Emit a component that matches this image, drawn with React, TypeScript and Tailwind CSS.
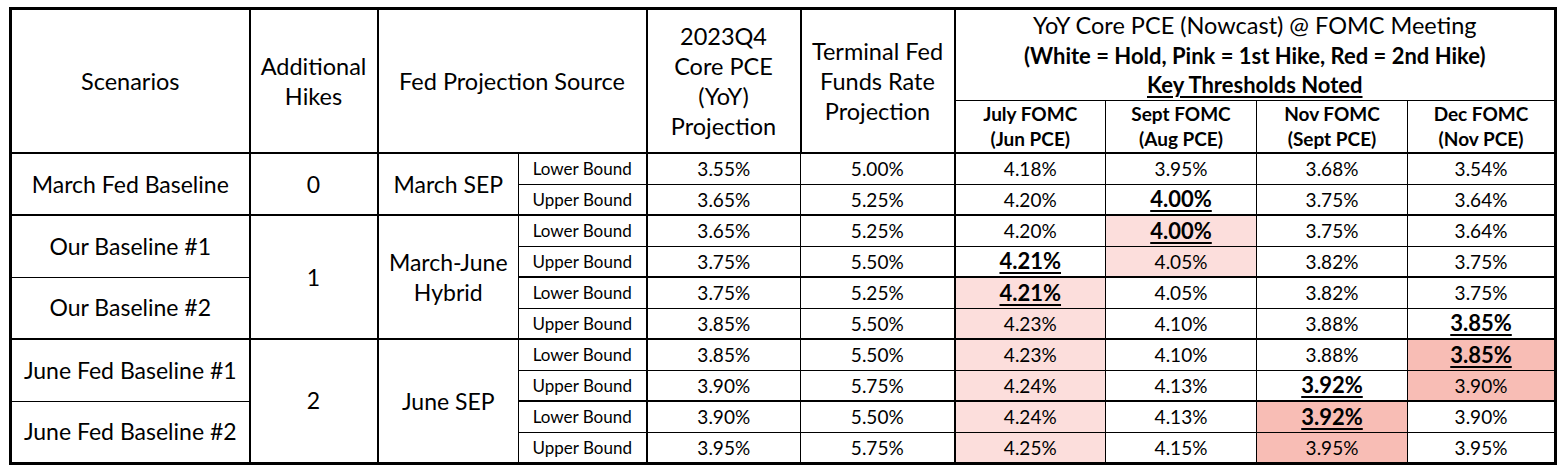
import React from 'react';

type Mark = 'pink' | 'red' | undefined;

interface Value {
  v: string;
  key?: boolean;
  fill?: Mark;
}

interface Row {
  bound: string;
  core: string;
  terminal: string;
  meetings: Value[];
}

const rows: Row[] = [
  { bound: 'Lower Bound', core: '3.55%', terminal: '5.00%', meetings: [{ v: '4.18%' }, { v: '3.95%' }, { v: '3.68%' }, { v: '3.54%' }] },
  { bound: 'Upper Bound', core: '3.65%', terminal: '5.25%', meetings: [{ v: '4.20%' }, { v: '4.00%', key: true }, { v: '3.75%' }, { v: '3.64%' }] },
  { bound: 'Lower Bound', core: '3.65%', terminal: '5.25%', meetings: [{ v: '4.20%' }, { v: '4.00%', key: true, fill: 'pink' }, { v: '3.75%' }, { v: '3.64%' }] },
  { bound: 'Upper Bound', core: '3.75%', terminal: '5.50%', meetings: [{ v: '4.21%', key: true }, { v: '4.05%', fill: 'pink' }, { v: '3.82%' }, { v: '3.75%' }] },
  { bound: 'Lower Bound', core: '3.75%', terminal: '5.25%', meetings: [{ v: '4.21%', key: true, fill: 'pink' }, { v: '4.05%' }, { v: '3.82%' }, { v: '3.75%' }] },
  { bound: 'Upper Bound', core: '3.85%', terminal: '5.50%', meetings: [{ v: '4.23%', fill: 'pink' }, { v: '4.10%' }, { v: '3.88%' }, { v: '3.85%', key: true }] },
  { bound: 'Lower Bound', core: '3.85%', terminal: '5.50%', meetings: [{ v: '4.23%', fill: 'pink' }, { v: '4.10%' }, { v: '3.88%' }, { v: '3.85%', key: true, fill: 'red' }] },
  { bound: 'Upper Bound', core: '3.90%', terminal: '5.75%', meetings: [{ v: '4.24%', fill: 'pink' }, { v: '4.13%' }, { v: '3.92%', key: true }, { v: '3.90%', fill: 'red' }] },
  { bound: 'Lower Bound', core: '3.90%', terminal: '5.50%', meetings: [{ v: '4.24%', fill: 'pink' }, { v: '4.13%' }, { v: '3.92%', key: true, fill: 'red' }, { v: '3.90%' }] },
  { bound: 'Upper Bound', core: '3.95%', terminal: '5.75%', meetings: [{ v: '4.25%', fill: 'pink' }, { v: '4.15%' }, { v: '3.95%', fill: 'red' }, { v: '3.95%' }] },
];

// scenario name cells, keyed by the row they start on
const scenarios: Record<number, { name: string; groupStart: boolean }> = {
  0: { name: 'March Fed Baseline', groupStart: true },
  2: { name: 'Our Baseline #1', groupStart: true },
  4: { name: 'Our Baseline #2', groupStart: false },
  6: { name: 'June Fed Baseline #1', groupStart: true },
  8: { name: 'June Fed Baseline #2', groupStart: false },
};

// hikes + source cells, keyed by first row
const groups: Record<number, { hikes: string; source: React.ReactNode; span: number }> = {
  0: { hikes: '0', source: 'March SEP', span: 2 },
  2: { hikes: '1', source: <>March-June<br />Hybrid</>, span: 4 },
  6: { hikes: '2', source: 'June SEP', span: 4 },
};

const fillClass = (f: Mark) =>
  f === 'pink' ? 'bg-[#fcdedc]' : f === 'red' ? 'bg-[#f8bdb5]' : 'bg-white';

export default function App() {
  return (
    <div className="bg-white min-h-[470px] pl-[9px] pt-[7px] text-black" style={{ fontFamily: 'Lato, "Open Sans", sans-serif' }}>
      <table className="table-fixed border-collapse border-[3px] border-black w-[1545px]">
        <colgroup>
          <col className="w-[239px]" />
          <col className="w-[128px]" />
          <col className="w-[141px]" />
          <col className="w-[128px]" />
          <col className="w-[154px]" />
          <col className="w-[154px]" />
          <col className="w-[151px]" />
          <col className="w-[151px]" />
          <col className="w-[151px]" />
          <col className="w-[148px]" />
        </colgroup>
        <thead>
          <tr className="h-[91px]">
            <th rowSpan={2} className="border-2 border-black font-normal text-[23.5px] leading-[30px]">Scenarios</th>
            <th rowSpan={2} className="border-2 border-black font-normal text-[23.5px] leading-[30px]">Additional<br />Hikes</th>
            <th rowSpan={2} colSpan={2} className="border-2 border-black font-normal text-[23.5px] leading-[30px]">Fed Projection Source</th>
            <th rowSpan={2} className="border-2 border-black font-normal text-[23.5px] leading-[30px]">2023Q4<br />Core PCE<br />(YoY)<br />Projection</th>
            <th rowSpan={2} className="border border-black border-b-2 font-normal text-[23.5px] leading-[30px]">Terminal Fed<br />Funds Rate<br />Projection</th>
            <th colSpan={4} className="border-2 border-black border-b font-normal leading-[29.5px] pt-[1px] whitespace-nowrap">
              <div className="text-[23.5px]">YoY Core PCE (Nowcast) @ FOMC Meeting</div>
              <div className="font-bold text-[22px]">(White = Hold, Pink = 1st Hike, Red = 2nd Hike)</div>
              <div className="font-bold text-[22px] underline underline-offset-[3px]">Key Thresholds Noted</div>
            </th>
          </tr>
          <tr className="h-[53px]">
            {['July FOMC|(Jun PCE)', 'Sept FOMC|(Aug PCE)', 'Nov FOMC|(Sept PCE)', 'Dec FOMC|(Nov PCE)'].map((h, i) => {
              const [a, b] = h.split('|');
              return (
                <th key={h} className={`border border-black border-b-2 ${i === 0 ? 'border-l-2' : ''} font-bold text-[19px] leading-[25px]`}>
                  {a}<br />{b}
                </th>
              );
            })}
          </tr>
        </thead>
        <tbody>
          {rows.map((r, i) => {
            const top = i % 2 === 0 ? 'border-t-2' : 'border-t';
            const sc = scenarios[i];
            const g = groups[i];
            return (
              <tr key={i} className="h-[31px]">
                {sc && (
                  <td
                    rowSpan={2}
                    className={`border border-black border-r-2 ${sc.groupStart ? 'border-t-2' : 'border-t'} text-center text-[23px] leading-none`}
                  >
                    {sc.name}
                  </td>
                )}
                {g && (
                  <>
                    <td rowSpan={g.span} className="border-2 border-black text-center text-[23px] leading-none">{g.hikes}</td>
                    <td rowSpan={g.span} className="border-2 border-black border-r text-center text-[23px] leading-[30px]">{g.source}</td>
                  </>
                )}
                <td className={`border border-black ${top} border-r-2 text-center text-[17px] leading-none`}>{r.bound}</td>
                <td className={`border border-black ${top} border-l-2 text-center text-[19px] leading-none`}>{r.core}</td>
                <td className={`border border-black ${top} border-r-2 text-center text-[19px] leading-none`}>{r.terminal}</td>
                {r.meetings.map((m, j) => (
                  <td
                    key={j}
                    className={`border border-black ${top} ${j === 0 ? 'border-l-2' : ''} ${fillClass(m.fill)} text-center leading-none ${
                      m.key ? 'text-[22px] font-bold underline underline-offset-[3px]' : 'text-[19px]'
                    }`}
                  >
                    {m.v}
                  </td>
                ))}
              </tr>
            );
          })}
        </tbody>
      </table>
    </div>
  );
}
